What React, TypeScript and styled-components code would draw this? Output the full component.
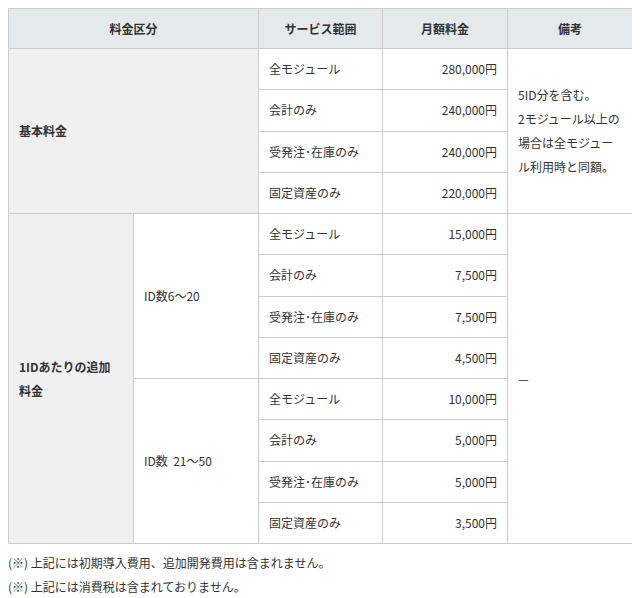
import { createGlobalStyle, styled } from "styled-components";

const GlobalStyle = createGlobalStyle`
  body {
    margin: 8px;
    background: #fff;
    font-family: "Noto Sans CJK JP", "Noto Sans", sans-serif;
    font-size: 12px;
    color: #333;
  }
`;

const PriceTable = styled.table`
  width: 624px;
  border-collapse: collapse;
  table-layout: fixed;
  border: 1px solid #ccc;

  tr {
    height: 41.25px;
  }
  thead tr {
    height: 40px;
  }

  th,
  td {
    border: 1px solid #ccc;
    padding: 0 10px;
    line-height: 24px;
    vertical-align: middle;
    white-space: nowrap;
  }
`;

const Head = styled.th`
  background: #e4e9eb;
  font-weight: bold;
  text-align: center;
`;

const Category = styled.td`
  background: #f0f0f0;
  font-weight: bold;
  text-align: left;
`;

const Sub = styled.td`
  background: #fff;
`;

const Cell = styled.td<{ $right?: boolean }>`
  background: #fff;
  text-align: ${(p) => (p.$right ? "right" : "left")};
`;

const Notes = styled.div`
  margin-top: 7px;

  p {
    margin: 0;
    line-height: 24px;
  }
`;

const baseRows = [
  ["全モジュール", "280,000円"],
  ["会計のみ", "240,000円"],
  ["受発注･在庫のみ", "240,000円"],
  ["固定資産のみ", "220,000円"],
];

const extraGroups = [
  {
    label: "ID数6〜20",
    rows: [
      ["全モジュール", "15,000円"],
      ["会計のみ", "7,500円"],
      ["受発注･在庫のみ", "7,500円"],
      ["固定資産のみ", "4,500円"],
    ],
  },
  {
    label: "ID数\u00a0\u00a021〜50",
    rows: [
      ["全モジュール", "10,000円"],
      ["会計のみ", "5,000円"],
      ["受発注･在庫のみ", "5,000円"],
      ["固定資産のみ", "3,500円"],
    ],
  },
];

export default function App() {
  return (
    <>
      <GlobalStyle />
      <PriceTable>
        <colgroup>
          <col style={{ width: 125 }} />
          <col style={{ width: 125 }} />
          <col style={{ width: 124 }} />
          <col style={{ width: 125 }} />
          <col style={{ width: 125 }} />
        </colgroup>
        <thead>
          <tr>
            <Head colSpan={2}>料金区分</Head>
            <Head>サービス範囲</Head>
            <Head>月額料金</Head>
            <Head>備考</Head>
          </tr>
        </thead>
        <tbody>
          {baseRows.map(([name, price], i) => (
            <tr key={name}>
              {i === 0 && (
                <Category colSpan={2} rowSpan={4}>
                  基本料金
                </Category>
              )}
              <Cell>{name}</Cell>
              <Cell $right>{price}</Cell>
              {i === 0 && (
                <Cell rowSpan={4}>
                  5ID分を含む。
                  <br />
                  2モジュール以上の
                  <br />
                  場合は全モジュー
                  <br />
                  ル利用時と同額。
                </Cell>
              )}
            </tr>
          ))}
          {extraGroups.map((group, g) =>
            group.rows.map(([name, price], i) => (
              <tr key={group.label + name}>
                {g === 0 && i === 0 && (
                  <Category rowSpan={8}>
                    1IDあたりの追加
                    <br />
                    料金
                  </Category>
                )}
                {i === 0 && <Sub rowSpan={4}>{group.label}</Sub>}
                <Cell>{name}</Cell>
                <Cell $right>{price}</Cell>
                {g === 0 && i === 0 && <Cell rowSpan={8}>—</Cell>}
              </tr>
            ))
          )}
        </tbody>
      </PriceTable>
      <Notes>
        <p>(※) 上記には初期導入費用、追加開発費用は含まれません。</p>
        <p>(※) 上記には消費税は含まれておりません。</p>
      </Notes>
    </>
  );
}
